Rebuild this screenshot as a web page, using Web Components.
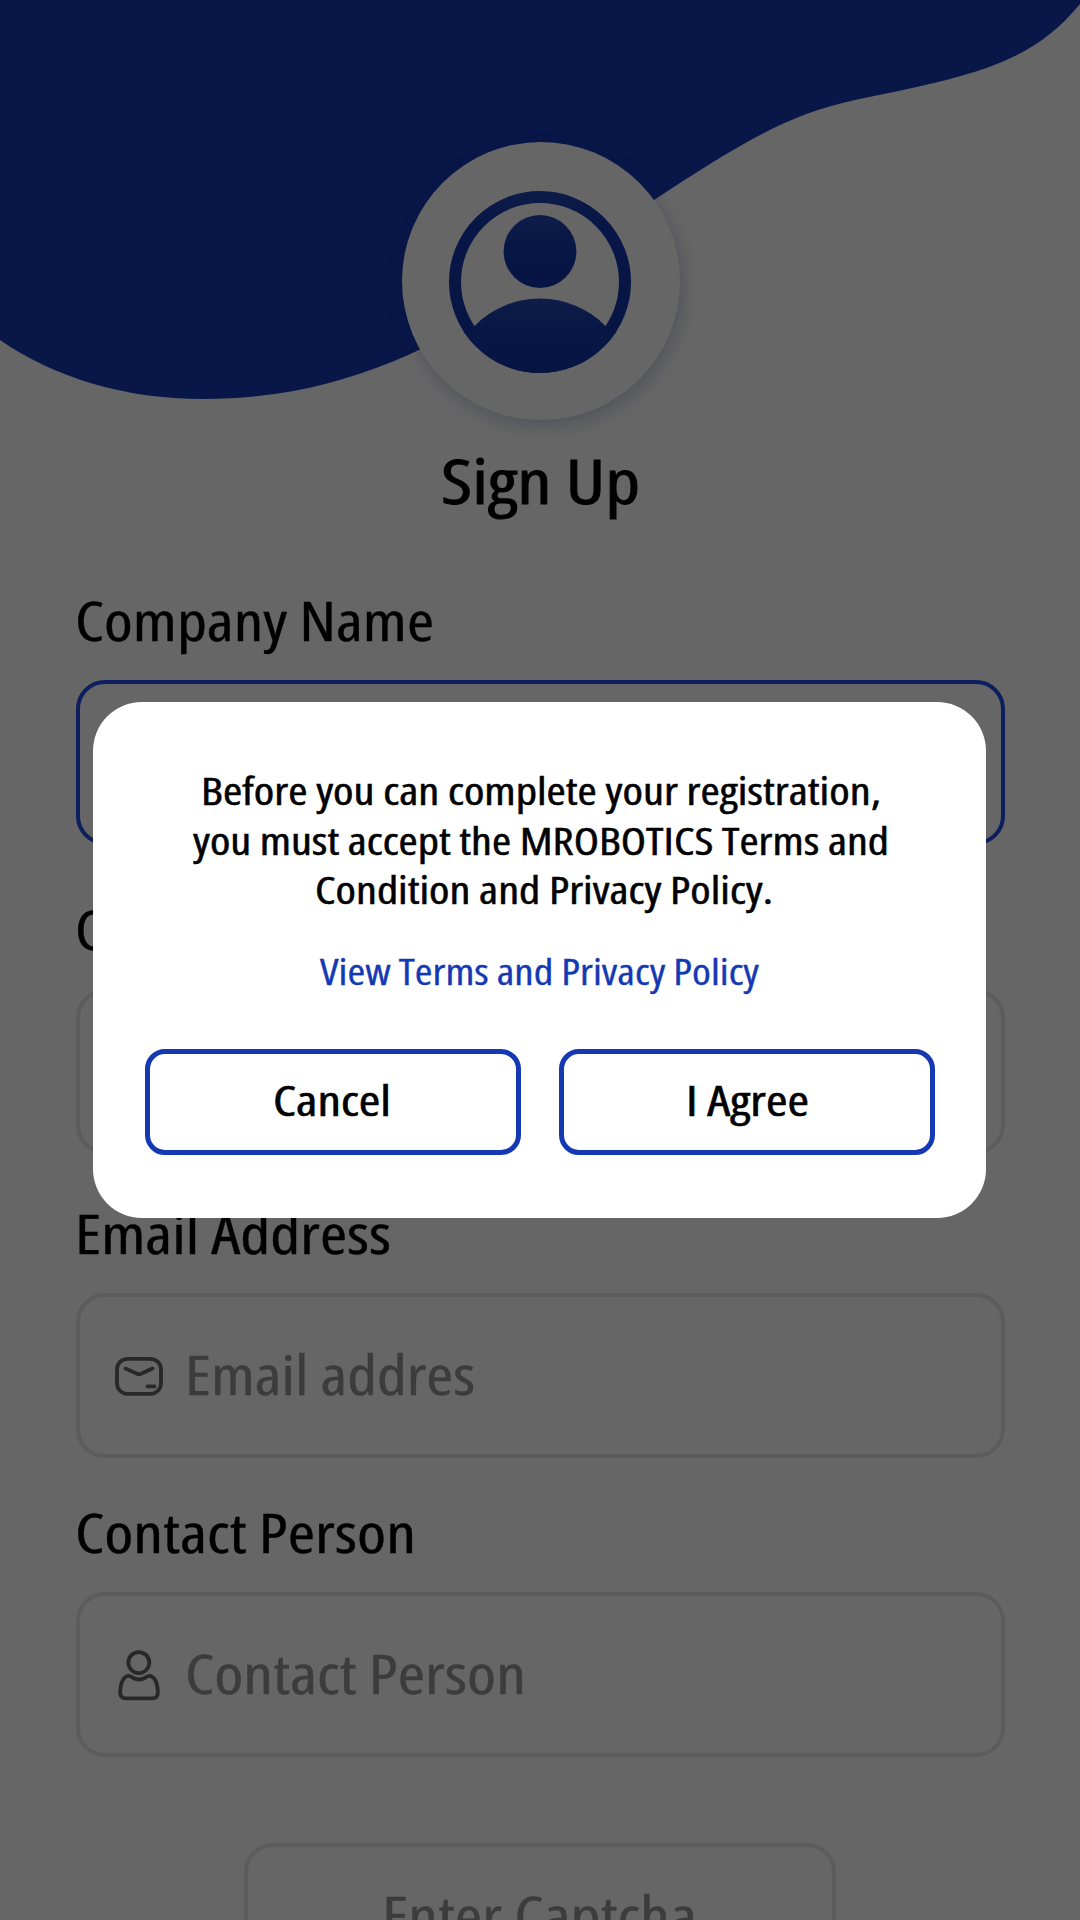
<!DOCTYPE html>
<html lang="en">
<head>
<meta charset="utf-8">
<title>Sign Up</title>
<style>
html,body{margin:0;width:1080px;height:1920px;overflow:hidden;background:#fff}
body{font-family:"Open Sans","Noto Sans",sans-serif;color:#000}
</style>
</head>
<body>
<signup-screen></signup-screen>
<script>
const define = (name, html, ready) => customElements.define(name, class extends HTMLElement {
  constructor() {
    super();
    this.attachShadow({mode: 'open'}).innerHTML = html;
  }
  connectedCallback() { if (ready) ready(this, this.shadowRoot); }
});

/* One line of semi-condensed text, set to the advance width in "w". */
define('fit-text', `<style>
:host{display:block;white-space:nowrap;font-stretch:87.5%;flex:none}
span{display:inline-block;transform-origin:0 50%;white-space:nowrap}
</style><span><slot></slot></span>`, (el, root) => {
  const w = +el.getAttribute('w'), s = root.querySelector('span');
  el.style.width = w + 'px';
  const fit = () => {
    s.style.transform = 'none';
    const n = s.getBoundingClientRect().width;
    if (n) s.style.transform = `scaleX(${w / n})`;
  };
  requestAnimationFrame(fit);
  fit();
});

define('wave-header', `<style>
:host{display:block;position:relative;height:440px}
svg{display:block;position:absolute;left:0;top:0}
.badge{box-sizing:border-box;width:278px;height:278px;border-radius:50%;background:#fff;box-shadow:3px 6px 18px rgba(16,32,120,.22);
 position:absolute;left:402px;top:142px}
</style>
<svg width="1080" height="440" viewBox="0 0 1080 440"><path fill="#143ab3" d="M0 0H1080V4C1030 66 965 77 855 100C785 115 735 147 654 200C520 290 400 399 203 399C125 399 55 378 0 340Z"/></svg>
<div class="badge"><svg width="278" height="278" viewBox="402 142 278 278">
<defs>
<clipPath id="disc"><circle cx="540" cy="282" r="91"/></clipPath>
<linearGradient id="h" x1="0" y1="0" x2="0" y2="1"><stop offset="0" stop-color="#2448b4"/><stop offset=".45" stop-color="#1438ae"/><stop offset="1" stop-color="#1035a8"/></linearGradient>
<linearGradient id="b" gradientUnits="userSpaceOnUse" x1="0" y1="298" x2="0" y2="373"><stop offset="0" stop-color="#2448b4"/><stop offset=".45" stop-color="#1438ae"/><stop offset="1" stop-color="#0f34a6"/></linearGradient>
<linearGradient id="r" gradientUnits="userSpaceOnUse" x1="0" y1="191" x2="0" y2="373"><stop offset="0" stop-color="#2245b4"/><stop offset=".18" stop-color="#1439b0"/><stop offset="1" stop-color="#1035a8"/></linearGradient>
</defs>
<circle cx="540" cy="282" r="85" fill="none" stroke="url(#r)" stroke-width="12"/>
<circle cx="540" cy="251.5" r="36.4" fill="url(#h)"/>
<path clip-path="url(#disc)" fill="url(#b)" d="M474.5 326A91.7 91.7 0 0 1 605.5 326L632 340V380H448V340Z"/>
</svg></div>`);

const icons = {
  mail: '<rect x="8" y="12.8" width="44" height="35" rx="10.5"/><path d="M16.5 22.6L28 27.7Q30 28.6 32 27.7L43.5 22.6M38.5 40.3H45.5"/>',
  user: '<circle cx="29.8" cy="17.6" r="10.5"/><path d="M20 30.8C22.5 30.8 24 34.5 30 34.5S37.5 30.8 40 30.8C45.5 30.8 48.8 38 48.8 48C48.8 51.5 46.5 53.3 43 53.3H17C13.5 53.3 11.2 51.5 11.2 48C11.2 38 14.5 30.8 20 30.8Z"/>'
};
define('line-icon', `<style>
:host{display:block;width:60px;height:60px;flex:none}
svg{display:block;fill:none;stroke:#646464;stroke-width:3.8;stroke-linecap:round;stroke-linejoin:round}
</style><svg width="60" height="60" viewBox="0 0 60 60"></svg>`, (el, root) => {
  root.querySelector('svg').innerHTML = icons[el.getAttribute('name')] || '';
});

define('form-field', `<style>
:host{display:flex;flex-direction:column;gap:25px;font-size:54px;-webkit-text-stroke:.4px currentColor}
.label{line-height:70px;margin-left:-1.5px;height:70px}
.box{box-sizing:border-box;height:165px;border:4px solid #e5e5e5;border-radius:29px;display:flex;align-items:center;gap:16px;padding:0 29px;color:#969696;line-height:70px}
:host([focused]) .box{border-color:#1e4de8}
::slotted(fit-text[slot=placeholder]){margin-top:-4px}
</style><div class="label"><slot name="label"></slot></div>
<div class="box"><slot name="icon"></slot><slot name="placeholder"></slot></div>`);

define('captcha-field', `<style>
:host{box-sizing:border-box;display:flex;justify-content:center;width:592px;height:165px;border:4px solid #e5e5e5;border-radius:29px;
 font-size:54px;line-height:70px;color:#969696;padding:33px 1px 0 0;flex:none;-webkit-text-stroke:.4px currentColor}
</style><slot></slot>`);

define('dialog-button', `<style>
:host{box-sizing:border-box;display:flex;align-items:center;justify-content:center;width:376px;height:106px;border:5px solid #1539b3;border-radius:20px;font-size:42px;line-height:60px;font-weight:500;-webkit-text-stroke:.6px currentColor}
::slotted(*){margin-top:-4px}
</style><slot></slot>`);

define('terms-dialog', `<style>
:host{position:absolute;inset:0;background:rgba(0,0,0,.6)}
.card{box-sizing:border-box;width:893px;height:516px;margin:702px 0 0 93px;padding-top:64px;background:#fff;border-radius:49px;display:flex;flex-direction:column;align-items:center}
.msg{display:flex;flex-direction:column;align-items:center;font-size:37.5px;line-height:49.5px;font-weight:500;-webkit-text-stroke:.5px currentColor;margin-left:3px}
.link{font-size:35.5px;line-height:50px;color:#1539b3;margin-top:31.5px;-webkit-text-stroke:.3px currentColor}
.actions{display:flex;gap:38px;margin-top:53px}
</style><div class="card">
<div class="msg"><slot name="message"></slot></div>
<div class="link"><slot name="link"></slot></div>
<div class="actions"><slot name="action"></slot></div></div>`);

define('signup-screen', `<style>
:host{display:block;position:relative;width:1080px;height:1920px;overflow:hidden;background:#fff}
.page{display:flex;flex-direction:column}
h1{margin:0;font-size:62px;line-height:80px;height:80px;font-weight:500;-webkit-text-stroke:.9px currentColor;display:flex;justify-content:center}
.form{display:flex;flex-direction:column;width:929px;margin:65px 0 0 76px}
captcha-field{margin:86px auto 0 168px}
</style>
<div class="page">
<wave-header></wave-header>
<h1><fit-text w="199">Sign Up</fit-text></h1>
<div class="form">
<form-field focused><fit-text slot="label" w="359">Company Name</fit-text></form-field>
<form-field style="margin-top:49px"><fit-text slot="label" w="28">C</fit-text></form-field>
<form-field style="margin-top:44px"><fit-text slot="label" w="316">Email Address</fit-text><line-icon slot="icon" name="mail"></line-icon><fit-text slot="placeholder" w="290">Email addres</fit-text></form-field>
<form-field style="margin-top:39px"><fit-text slot="label" w="341">Contact Person</fit-text><line-icon slot="icon" name="user"></line-icon><fit-text slot="placeholder" w="341">Contact Person</fit-text></form-field>
<captcha-field><fit-text w="315">Enter Captcha</fit-text></captcha-field>
</div></div>
<terms-dialog>
<fit-text slot="message" w="680">Before you can complete your registration,</fit-text>
<fit-text slot="message" w="696">you must accept the MROBOTICS Terms and</fit-text>
<fit-text slot="message" w="458" style="margin-left:6px">Condition and Privacy Policy.</fit-text>
<fit-text slot="link" w="439">View Terms and Privacy Policy</fit-text>
<dialog-button slot="action"><fit-text w="118" style="margin-right:2px">Cancel</fit-text></dialog-button>
<dialog-button slot="action"><fit-text w="123" style="margin-left:1px">I Agree</fit-text></dialog-button>
</terms-dialog>`);
</script>
</body>
</html>
